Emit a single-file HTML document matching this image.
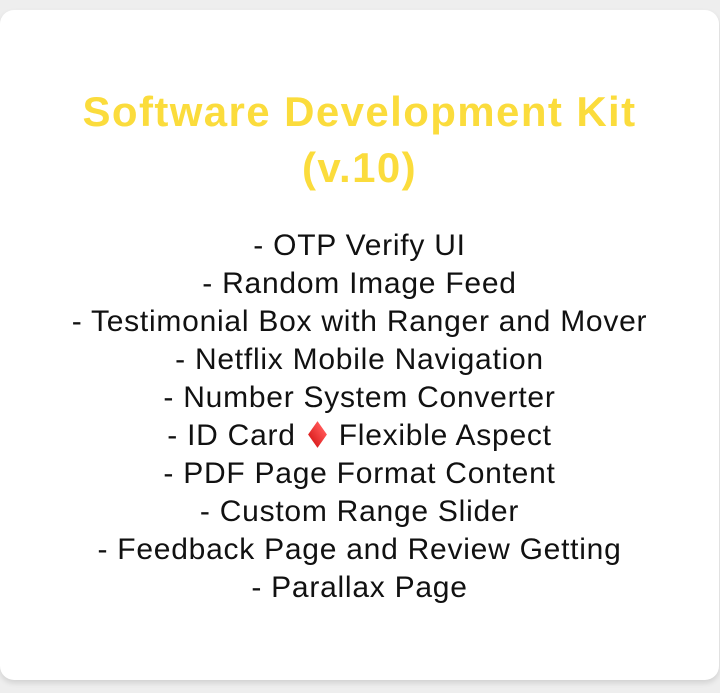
<!DOCTYPE html>
<html><head><meta charset="utf-8"><style>
html,body{margin:0;padding:0;background:#eeeeee;width:720px;height:693px;overflow:hidden;font-family:"Liberation Sans",sans-serif;}
.card{position:absolute;left:0;top:10px;width:719px;height:670px;background:#fff;border-radius:14px;box-shadow:0 3px 6px rgba(0,0,0,0.12);}
h1{position:absolute;top:74px;left:0;width:719px;margin:0;text-align:center;color:#fbdc3c;font-size:42px;letter-spacing:1.4px;font-weight:bold;line-height:56px;}
.list{position:absolute;top:217px;left:0;width:719px;text-align:center;color:#111;font-size:30px;letter-spacing:0.75px;line-height:38px;}
.d{display:inline-block;width:19px;height:19px;background:linear-gradient(#f55,#d22);transform:scaleX(0.7) rotate(45deg);vertical-align:1px;margin:0 12px;}
</style></head><body>
<div class="card">
<h1>Software Development Kit<br>(v.10)</h1>
<div class="list">
- OTP Verify UI<br>
- Random Image Feed<br>
- Testimonial Box with Ranger and Mover<br>
- Netflix Mobile Navigation<br>
- Number System Converter<br>
- ID Card<span class="d"></span>Flexible Aspect<br>
- PDF Page Format Content<br>
- Custom Range Slider<br>
- Feedback Page and Review Getting<br>
- Parallax Page
</div>
</div>
</body></html>
